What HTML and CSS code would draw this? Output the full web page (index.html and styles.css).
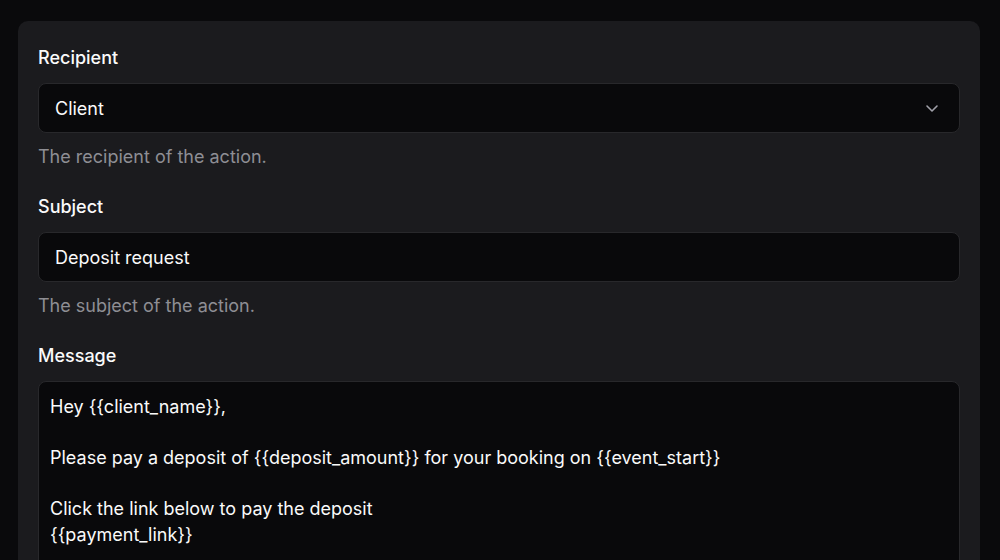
FILE: index.html
```html
<!DOCTYPE html>
<html lang="en">
<head>
    <meta charset="UTF-8">
    <meta name="viewport" content="width=device-width, initial-scale=1.0">
    <title>Action settings</title>
    <link rel="stylesheet" href="styles.css">
</head>
<body>
    <form class="card">
        <div class="field">
            <label for="recipient">Recipient</label>
            <div class="select" id="recipient">
                <span>Client</span>
                <svg class="chevron" width="24" height="24" viewBox="0 0 24 24" fill="none" stroke="currentColor" stroke-width="1.6" stroke-linecap="round" stroke-linejoin="round"><path d="m7 10 5 5 5-5"/></svg>
            </div>
            <p class="help">The recipient of the action.</p>
        </div>

        <div class="field">
            <label for="subject">Subject</label>
            <input type="text" id="subject" value="Deposit request">
            <p class="help">The subject of the action.</p>
        </div>

        <div class="field">
            <label for="message">Message</label>
            <textarea id="message" rows="8">Hey {{client_name}},

Please pay a deposit of {{deposit_amount}} for your booking on {{event_start}}

Click the link below to pay the deposit
{{payment_link}}</textarea>
        </div>
    </form>
</body>
</html>
```

FILE: styles.css
```css
body {
    margin: 0;
    padding: 21px 20px 0 18px;
    background-color: #0a0a0c;
    color: #fafafa;
    font-family: Inter, "Noto Sans", sans-serif;
    font-size: 18px;
    overflow: hidden;
}
.card {
    background-color: #1b1b1e;
    border-radius: 10px;
    padding: 23px 20px 20px 20px;
    display: flex;
    flex-direction: column;
    gap: 22px;
    height: 600px;
}
.field {
    display: flex;
    flex-direction: column;
}
label {
    font-weight: 500;
    line-height: 28px;
    margin-bottom: 11px;
}
.select, input, textarea {
    box-sizing: border-box;
    width: 100%;
    background-color: #09090b;
    border: 1px solid #28282b;
    border-radius: 8px;
    color: #fafafa;
    font-family: inherit;
    font-size: 18px;
}
.select, input {
    height: 50px;
    padding: 0 16px;
}
.select {
    display: flex;
    align-items: center;
    justify-content: space-between;
    padding-right: 15px;
}
.chevron {
    color: #a1a1aa;
}
input {
    outline: none;
}
textarea {
    padding: 12px 11px;
    line-height: 25.6px;
    resize: none;
    height: 260px;
}
.help {
    margin: 10px 0 0 0;
    line-height: 28px;
    color: #8e8e94;
}
```
